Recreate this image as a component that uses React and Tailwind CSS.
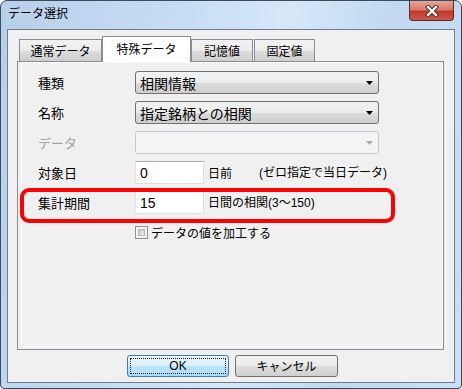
import React from "react";

const JP = { fontFamily: '"Noto Sans CJK JP", "Liberation Sans", sans-serif' };
const MIX = { fontFamily: '"Liberation Sans", "Noto Sans CJK JP", sans-serif' };

function Arrow({ color = "#000" }) {
  return (
    <svg width="7" height="4" viewBox="0 0 7 4">
      <path d="M0 0 H7 L3.5 4 Z" fill={color} />
    </svg>
  );
}

function Combo({ text, disabled }) {
  return (
    <div
      className={
        "w-[244px] h-[23px] rounded-[3px] border flex items-center justify-between pl-[4px] pr-[5px] " +
        (disabled
          ? "border-[#c4c8cc] bg-[#f4f4f4]"
          : "border-[#707070] bg-[linear-gradient(to_bottom,#f2f2f2_0%,#ebebeb_50%,#dddddd_51%,#cfcfcf_100%)]")
      }
    >
      <span className="text-[14px] leading-[16px] text-black" style={JP}>
        {text}
      </span>
      <Arrow color={disabled ? "#a9a9a9" : "#000"} />
    </div>
  );
}

function Input({ value }) {
  return (
    <div className="w-[69px] h-[23px] border border-[#dbdfe6] border-t-[#abadb3] border-l-[#e2e3ea] bg-white flex items-center pl-[4px]">
      <span className="text-[14px] leading-[16px] text-black" style={MIX}>
        {value}
      </span>
    </div>
  );
}

function Label({ children, disabled }) {
  return (
    <div
      className={"w-[97px] text-[13px] leading-[16px] " + (disabled ? "text-[#a3a3a3]" : "text-black")}
      style={JP}
    >
      {children}
    </div>
  );
}

export default function App() {
  return (
    <div className="w-[462px] h-[389px] bg-white">
      <div className="w-[462px] h-[389px] rounded-t-[7px] rounded-b-[4px] border border-[#3d4b5e] bg-[linear-gradient(100deg,#b7d0ea_0%,#c6ddf4_35%,#d6e8f9_55%,#c0d9f1_75%,#c9dff5_100%)] flex flex-col">
        {/* Title bar */}
        <div className="h-[28px] flex items-start">
          <div className="flex-1 pl-[7px] pt-[4px] text-[12px] leading-[16px] text-black" style={JP}>
            データ選択
          </div>
          <div className="mr-[7px] w-[45px] h-[20px] rounded-b-[4px] border border-t-0 border-[#5a2a26] bg-[linear-gradient(to_bottom,#e5a597_0%,#d8796b_45%,#c0392a_55%,#d0574a_100%)] flex items-center justify-center">
            <svg width="14" height="12" viewBox="0 0 14 12">
              <path d="M3 2 L11 10 M11 2 L3 10" stroke="#3a3a3a" strokeWidth="4.2" strokeLinecap="square" />
              <path d="M3 2 L11 10 M11 2 L3 10" stroke="#ffffff" strokeWidth="2.2" strokeLinecap="square" />
            </svg>
          </div>
        </div>
        {/* Body */}
        <div className="flex-1 px-[6px] pb-[5px]">
          <div className="h-full border border-[#6f7d8d] bg-[#f0f0f0] pt-[6px] pl-[9px] flex flex-col">
            {/* Tabs */}
            <div className="h-[25px] flex items-end ml-[2px]" style={JP}>
              <div className="w-[83px] h-[22px] border border-b-0 border-[#898c95] bg-[linear-gradient(to_bottom,#f2f2f2_0%,#ebebeb_50%,#dddddd_51%,#cfcfcf_100%)] flex items-center justify-center text-[12px] leading-[14px] text-black">
                通常データ
              </div>
              <div className="relative z-10 -mb-px w-[89px] h-[26px] border border-b-0 border-[#898c95] bg-white flex items-center justify-center text-[12px] leading-[14px] text-black pb-[2px]">
                特殊データ
              </div>
              <div className="w-[62px] h-[22px] border border-b-0 border-[#898c95] bg-[linear-gradient(to_bottom,#f2f2f2_0%,#ebebeb_50%,#dddddd_51%,#cfcfcf_100%)] flex items-center justify-center text-[12px] leading-[14px] text-black">
                記憶値
              </div>
              <div className="ml-[1px] w-[61px] h-[22px] border border-b-0 border-[#898c95] bg-[linear-gradient(to_bottom,#f2f2f2_0%,#ebebeb_50%,#dddddd_51%,#cfcfcf_100%)] flex items-center justify-center text-[12px] leading-[14px] text-black">
                固定値
              </div>
            </div>
            {/* Pane */}
            <div className="relative w-[427px] h-[289px] border border-[#898c95] bg-[#f0f0f0] pl-[3px] pb-[2px]">
              <div className="h-full border border-white pt-[8px] pl-[16px] flex flex-col gap-[7px]">
                <div className="flex items-center h-[23px]">
                  <Label>種類</Label>
                  <Combo text="相関情報" />
                </div>
                <div className="flex items-center h-[23px]">
                  <Label>名称</Label>
                  <Combo text="指定銘柄との相関" />
                </div>
                <div className="flex items-center h-[23px]">
                  <Label disabled>データ</Label>
                  <Combo text="" disabled />
                </div>
                <div className="flex items-center h-[23px]">
                  <Label>対象日</Label>
                  <Input value="0" />
                  <span className="ml-[4px] text-[12px] leading-[16px] text-black" style={JP}>日前</span>
                  <span className="ml-[27px] text-[12px] leading-[16px] text-black" style={JP}>
                    <span style={MIX}>(</span>ゼロ指定で当日データ<span style={MIX}>)</span>
                  </span>
                </div>
                <div className="flex items-center h-[23px]">
                  <Label>集計期間</Label>
                  <Input value="15" />
                  <span className="ml-[4px] text-[12px] leading-[16px] text-black" style={JP}>
                    日間の相関<span style={MIX}>(3〜150)</span>
                  </span>
                </div>
                <div className="flex items-center h-[13px] mt-[5px] pl-[97px]">
                  <div className="w-[13px] h-[13px] border border-[#8e8f8f] bg-[#f4f4f4] p-[2px]">
                    <div className="w-full h-full border border-[#b4b8bd] bg-[linear-gradient(135deg,#c4c8ce,#ececec)]" />
                  </div>
                  <span className="ml-[3px] text-[12px] leading-[16px] text-black" style={JP}>データの値を加工する</span>
                </div>
              </div>
              {/* Red highlight annotation */}
              <div className="absolute left-[2px] top-[126px] w-[375px] h-[35px] rounded-[9px] border-[4px] border-[#ff0000]" />
            </div>
            {/* Buttons */}
            <div className="mt-[5px] flex pl-[110px] gap-[6px]">
              <div className="w-[102px] h-[22px] rounded-[3px] border border-[#3c7fb1] bg-[linear-gradient(to_bottom,#eaf6fd_0%,#d9f0fc_50%,#bee6fd_51%,#a7d9f5_100%)] p-[2px]">
                <div className="w-full h-full border border-dotted border-[#222] flex items-center justify-center text-[12px] leading-[14px] text-black" style={MIX}>
                  OK
                </div>
              </div>
              <div className="w-[103px] h-[22px] rounded-[3px] border border-[#707070] bg-[linear-gradient(to_bottom,#f2f2f2_0%,#ebebeb_50%,#dddddd_51%,#cfcfcf_100%)] flex items-center justify-center text-[12px] leading-[14px] text-black" style={JP}>
                キャンセル
              </div>
            </div>
          </div>
        </div>
      </div>
    </div>
  );
}
